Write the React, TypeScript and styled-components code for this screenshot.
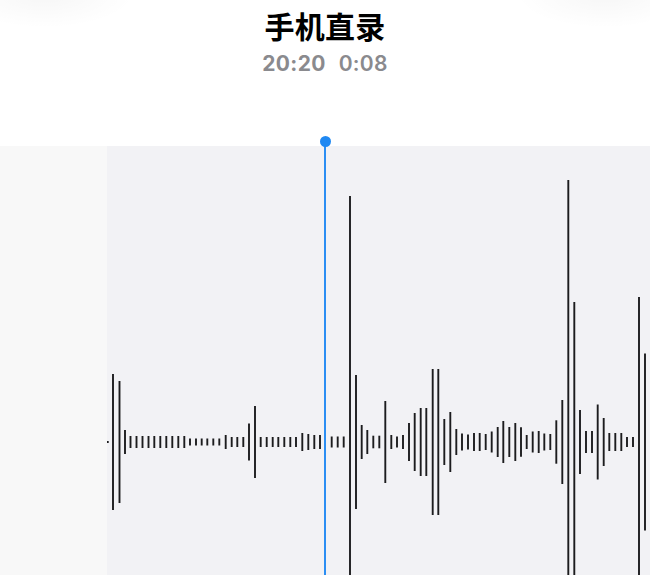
import React from 'react'
import styled, { createGlobalStyle } from 'styled-components'

const GlobalStyle = createGlobalStyle`
    html, body {
        margin: 0;
        padding: 0;
        background: #ffffff;
    }
    body {
        width: 650px;
        height: 575px;
        overflow: hidden;
        font-family: "Inter", "Noto Sans CJK SC", sans-serif;
    }
`

// x position on the page, half height of the bar (center line is y=442)
const BARS: [number, number][] = [
    [107.7, 1], [113, 68], [119.5, 61], [125, 12],
    [130.5, 6], [136.5, 6], [142.5, 6], [148.5, 6], [154.3, 6], [160.3, 6], [166.3, 6], [172.3, 6], [178.3, 6], [184.3, 6],
    [190, 3.5], [196, 3.5], [201.7, 3.5], [207.3, 3.5], [213.3, 3.5], [219.3, 3.5],
    [225.7, 7], [231.7, 5], [237.3, 5], [243.3, 5], [249, 18.5], [255, 36],
    [260.7, 5], [266.7, 5], [272.7, 5], [278.3, 5], [284.3, 5], [290.3, 5], [296, 5],
    [302.3, 9], [308.3, 8], [314.3, 7], [320, 7],
    [331.7, 5.5], [337.7, 5.5], [343.7, 5.5],
    [350, 246], [356, 67], [361.7, 17], [367.3, 12], [373.3, 6.3], [379.3, 6.3], [385.3, 41],
    [391.3, 7], [397, 5.5], [403, 7], [409, 19], [414.7, 29], [420.7, 34], [426.3, 34],
    [432.7, 73], [438.3, 73], [444.3, 23], [450.3, 30], [456.3, 13],
    [462, 8.5], [468, 7.5], [474, 9], [479.7, 9], [485.7, 8], [491.7, 10.5],
    [497.7, 15], [503.3, 21], [509.3, 15], [515.3, 19], [521, 14.7],
    [526.7, 7], [532.7, 10.5], [538.7, 11], [544.3, 8.5], [550.3, 8],
    [556.3, 21.7], [562.3, 42], [568.3, 262], [574.3, 140], [580, 32],
    [586, 11], [592, 11], [597.7, 37.5], [603.7, 24],
    [609.3, 9], [615.3, 9], [621.3, 9], [627, 5], [633, 5],
    [639, 145], [645, 88.5],
]

const TRACK_LEFT = 107
const TRACK_TOP = 146
const CENTER_Y = 442 - TRACK_TOP

const Page = styled.div`
    width: 650px;
    height: 575px;
    display: flex;
    flex-direction: column;
    background: #ffffff;
`

const Header = styled.header`
    height: ${TRACK_TOP}px;
    flex-shrink: 0;
    display: flex;
    flex-direction: column;
    align-items: center;
    background:
        radial-gradient(ellipse 90px 34px at 45px -6px, rgba(0, 0, 0, 0.035), transparent 100%),
        radial-gradient(ellipse 90px 34px at 605px -6px, rgba(0, 0, 0, 0.035), transparent 100%),
        #ffffff;
`

const Title = styled.h1`
    margin: 5px 0 0;
    font-family: "Noto Sans CJK SC", sans-serif;
    font-size: 30px;
    font-weight: 700;
    line-height: 40px;
    color: #000000;
    letter-spacing: 0.3px;
`

const Meta = styled.div`
    display: flex;
    gap: 13px;
    margin-top: 6px;
    font-family: "Inter", "Liberation Sans", sans-serif;
    font-size: 21px;
    line-height: 26px;
    color: #8a8a8e;
`

const Stamp = styled.span<{ $strong?: boolean }>`
    font-weight: ${p => (p.$strong ? 700 : 600)};
    letter-spacing: 0.3px;
`

const Stage = styled.section`
    flex: 1;
    display: flex;
`

const Gutter = styled.div`
    width: ${TRACK_LEFT}px;
    flex-shrink: 0;
    background: #f8f8f8;
`

const Track = styled.div`
    flex: 1;
    position: relative;
    background: #f2f2f5;
`

const Wave = styled.svg`
    display: block;
    width: 100%;
    height: 100%;
`

const Playhead = styled.div<{ $left: number }>`
    position: absolute;
    top: -5px;
    bottom: 0;
    left: ${p => p.$left}px;
    width: 2px;
    background: #2b8ef3;
    &::before {
        content: '';
        position: absolute;
        top: -5px;
        left: -4.5px;
        width: 11px;
        height: 11px;
        border-radius: 50%;
        background: #1f88f2;
    }
`

const Waveform: React.FC = () => {
    return (
        <Wave viewBox="0 0 543 429" preserveAspectRatio="none">
            {BARS.map(([x, half], i) => (
                <line
                    key={i}
                    x1={x - TRACK_LEFT}
                    x2={x - TRACK_LEFT}
                    y1={CENTER_Y - half}
                    y2={CENTER_Y + half}
                    stroke="#1c1c1e"
                    strokeWidth={half < 2 ? 2 : 1.9}
                    strokeLinecap="butt"
                />
            ))}
        </Wave>
    )
}

const App: React.FC = () => {
    return (
        <Page>
            <GlobalStyle />
            <Header>
                <Title>手机直录</Title>
                <Meta>
                    <Stamp $strong>20:20</Stamp>
                    <Stamp>0:08</Stamp>
                </Meta>
            </Header>
            <Stage>
                <Gutter />
                <Track>
                    <Waveform />
                    <Playhead $left={324 - TRACK_LEFT} />
                </Track>
            </Stage>
        </Page>
    )
}

export default App
